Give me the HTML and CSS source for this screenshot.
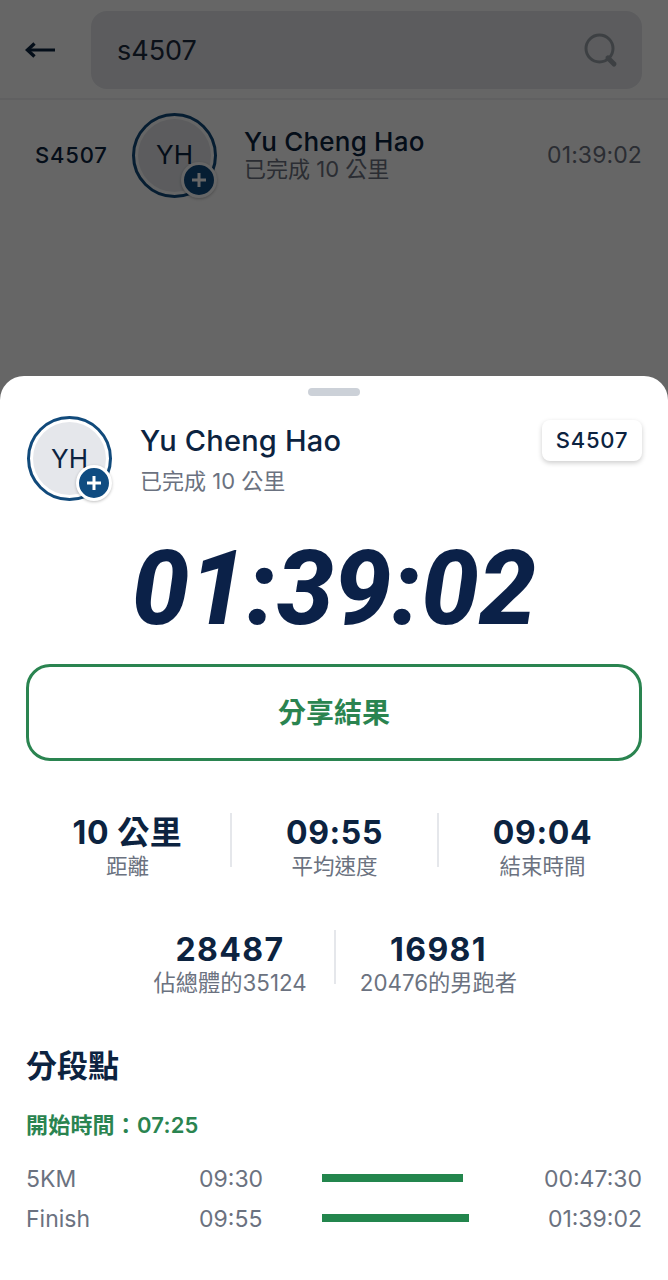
FILE: index.html
```html
<!DOCTYPE html>
<html lang="zh-Hant">
<head>
<meta charset="utf-8">
<title>s4507</title>
<link rel="stylesheet" href="styles.css">
</head>
<body>
<div class="page">
  <section class="behind">
    <header class="search-bar">
      <svg class="back" width="32" height="20" viewBox="0 0 32 20"><path d="M31 10H4" fill="none" stroke="#0c2340" stroke-width="3"/><path d="M10.500 3.500 3.500 10l7 6.500" fill="none" stroke="#0c2340" stroke-width="3.400"/></svg>
      <div class="search-box">
        <span class="search-text">s4507</span>
        <svg class="search-icon" width="36" height="36" viewBox="0 0 36 36"><circle cx="16.500" cy="16.500" r="13.500" fill="none" stroke="#99a0a8" stroke-width="3"/><path d="M25 26l6 6" stroke="#99a0a8" stroke-width="5" stroke-linecap="round"/></svg>
      </div>
    </header>
    <div class="result">
      <span class="bib">S4507</span>
      <div class="avatar"><span class="initials">YH</span><span class="plus"><svg width="18" height="18" viewBox="0 0 18 18"><path d="M9 2v14M2 9h14" stroke="#fff" stroke-width="3"/></svg></span></div>
      <div class="result-name">
        <div class="result-title">Yu Cheng Hao</div>
        <div class="result-sub">已完成 10 公里</div>
      </div>
      <span class="result-time">01:39:02</span>
    </div>
    <div class="scrim"></div>
  </section>
  <section class="sheet">
    <div class="handle"></div>
    <div class="runner">
      <div class="avatar"><span class="initials">YH</span><span class="plus"><svg width="18" height="18" viewBox="0 0 18 18"><path d="M9 2v14M2 9h14" stroke="#fff" stroke-width="3"/></svg></span></div>
      <div class="runner-name">
        <div class="runner-title">Yu Cheng Hao</div>
        <div class="runner-sub">已完成 10 公里</div>
      </div>
      <span class="bib-chip">S4507</span>
    </div>
    <div class="big-time">01:39:02</div>
    <div class="share">分享結果</div>
    <div class="stats">
      <div class="stat"><div class="stat-value">10 公里</div><div class="stat-label">距離</div></div>
      <div class="stat"><div class="stat-value">09:55</div><div class="stat-label">平均速度</div></div>
      <div class="stat"><div class="stat-value">09:04</div><div class="stat-label">結束時間</div></div>
    </div>
    <div class="ranks">
      <div class="stat"><div class="stat-value">28487</div><div class="stat-label">佔總體的35124</div></div>
      <div class="stat"><div class="stat-value">16981</div><div class="stat-label">20476的男跑者</div></div>
    </div>
    <h2 class="splits-title">分段點</h2>
    <div class="start-time">開始時間：07:25</div>
    <div class="split">
      <span class="split-name">5KM</span><span class="split-pace">09:30</span>
      <span class="split-track"><span class="split-bar" style="width:141px"></span></span>
      <span class="split-total">00:47:30</span>
    </div>
    <div class="split">
      <span class="split-name">Finish</span><span class="split-pace">09:55</span>
      <span class="split-track"><span class="split-bar" style="width:147px"></span></span>
      <span class="split-total">01:39:02</span>
    </div>
  </section>
</div>
</body>
</html>
```
FILE: styles.css
```css
* { box-sizing: border-box; }
html, body { margin: 0; padding: 0; background: #fff; }
body {
  width: 668px;
  height: 1280px;
  overflow: hidden;
  font-family: Inter, "Noto Sans CJK TC", sans-serif;
  color: #0c2340;
}
.page { width: 668px; height: 1280px; overflow: hidden; display: flex; flex-direction: column; }
.behind { position: relative; height: 404px; flex: none; background: #fff; }
.scrim { position: absolute; inset: 0; background: rgba(0, 0, 0, .6); }
.search-bar {
  height: 100px;
  padding: 11px 26px 0 24px;
  display: flex;
  gap: 35px;
  border-bottom: 2px solid #f0f1f3;
}
.back { flex: none; margin-top: 29px; }
.search-box {
  flex: 1;
  height: 78px;
  border-radius: 16px;
  background: #e5e7eb;
  display: flex;
  align-items: center;
  justify-content: space-between;
  padding: 0 23px 0 26px;
}
.search-text { font-size: 27px; color: #1d2b3f; }
.result { display: flex; align-items: center; padding: 13px 26px 0 35px; height: 97px; }
.bib { width: 97px; flex: none; font-size: 22px; font-weight: 550; letter-spacing: .8px; }
.avatar {
  position: relative;
  flex: none;
  width: 85px;
  height: 85px;
  border: 3px solid #114a7b;
  border-radius: 50%;
  background: #e5e7eb;
  box-shadow: inset 0 0 0 3px #fff;
  display: flex;
  align-items: center;
  justify-content: center;
}
.initials { font-size: 26px; color: #0c2340; margin: -1px 0 0 0; }
.plus {
  position: absolute;
  right: -3px;
  bottom: -3px;
  width: 36px;
  height: 36px;
  border-radius: 50%;
  background: #0f4c81;
  border: 3px solid #fff;
  box-shadow: 0 1px 3px rgba(0, 0, 0, .25);
  display: flex;
  align-items: center;
  justify-content: center;
}
.result-name { margin-left: 27px; flex: 1; }
.result-title { font-size: 26px; font-weight: 500; line-height: 29px; letter-spacing: .2px; margin-top: -1px; }
.result-sub { font-size: 22px; line-height: 26px; color: #6b7280; }
.result-time { font-size: 23px; letter-spacing: .1px; color: #6b7280; }
.sheet {
  position: relative;
  flex: 1;
  margin-top: -28px;
  background: #fff;
  border-radius: 24px 24px 0 0;
  padding: 12px 26px 0 26px;
}
.handle { width: 52px; height: 8px; margin: 0 auto; border-radius: 4px; background: #ccd1d8; }
.runner { display: flex; margin-top: 20px; align-items: flex-start; padding-left: 1px; }
.runner-name { margin-left: 28px; flex: 1; }
.runner-title { font-size: 29px; font-weight: 500; line-height: 40px; margin-top: 5px; letter-spacing: .2px; }
.runner-sub { font-size: 22px; line-height: 26px; margin-top: 7px; color: #6b7280; }
.bib-chip {
  flex: none;
  width: 100px;
  height: 41px;
  margin-top: 4px;
  border-radius: 8px;
  background: #fff;
  box-shadow: 0 2px 5px rgba(0, 0, 0, .2);
  font-size: 22px;
  font-weight: 550;
  letter-spacing: .8px;
  line-height: 41px;
  text-align: center;
}
.big-time {
  margin-top: 28px;
  text-align: center;
  font-family: Roboto, sans-serif;
  font-size: 103px;
  font-weight: 800;
  font-style: italic;
  line-height: 120px;
  color: #0b2148;
}
.share {
  height: 97px;
  margin-top: 15px;
  padding-bottom: 4px;
  border: 3px solid #2a8450;
  border-radius: 24px;
  display: flex;
  align-items: center;
  justify-content: center;
  font-size: 28px;
  font-weight: 700;
  color: #2a8450;
}
.stats { display: grid; grid-template-columns: repeat(3, 207px); margin: 52px 0 0 -1px; width: 621px; }
.stat { text-align: center; height: 54px; }
.stats .stat:not(:last-child) { border-right: 2px solid #e5e7eb; }
.stat-value { font-size: 32px; font-weight: 700; line-height: 38px; letter-spacing: .6px; padding-top: 1px; }
.stat-label { font-size: 21.500px; line-height: 28px; color: #6b7280; }
.ranks { display: grid; grid-template-columns: 205px 205px; justify-content: center; margin-top: 63px; }
.ranks .stat:last-child { border-left: 2px solid #e5e7eb; padding-left: 2px; }
.ranks .stat:first-child { padding-right: 3px; }
.ranks .stat-value { letter-spacing: 1.400px; }
.ranks .stat-label { font-size: 22.300px; }
.splits-title { margin: 60px 0 0; font-size: 31px; font-weight: 600; line-height: 44px; }
.start-time { margin-top: 22px; font-size: 22px; font-weight: 600; letter-spacing: .2px; line-height: 30px; color: #2a8450; }
.split { display: flex; align-items: center; height: 40px; font-size: 23px; color: #6b7280; }
.start-time + .split { margin-top: 19px; }
.split-name { width: 173px; flex: none; }
.split-pace { width: 123px; flex: none; }
.split-track { flex: 1; display: block; }
.split-bar { display: block; height: 8px; margin-top: -2px; background: #23864d; }
.split-total { flex: none; }
```
